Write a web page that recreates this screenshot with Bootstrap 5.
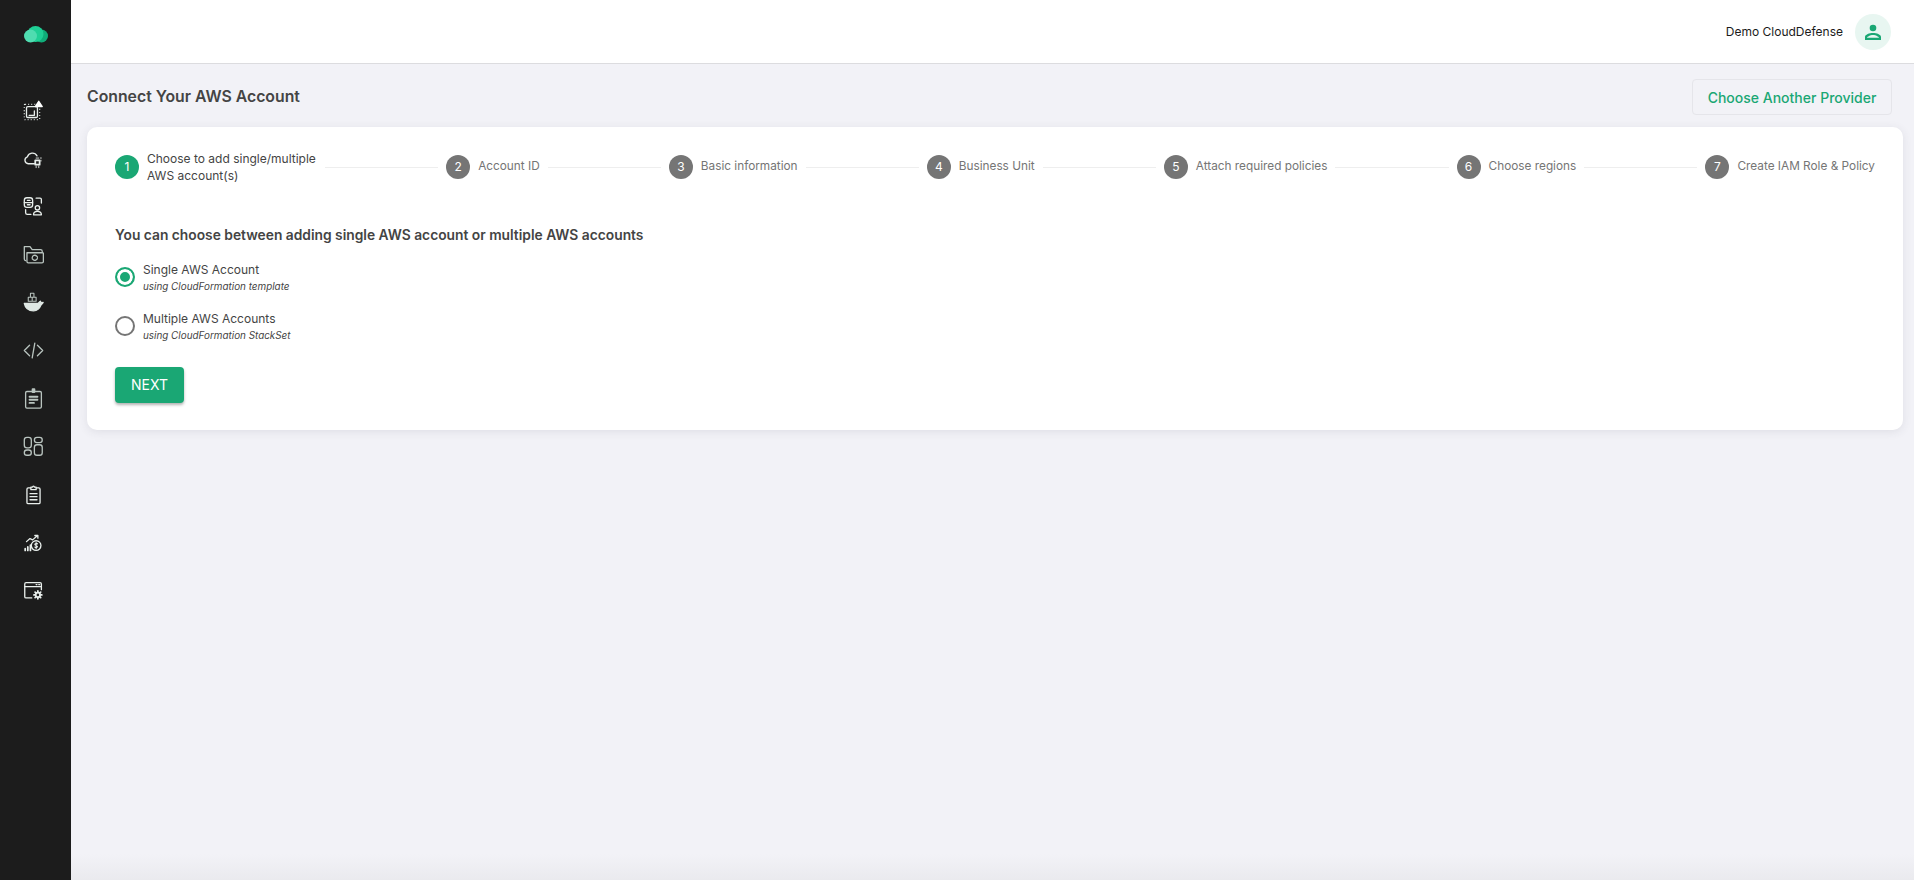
<!DOCTYPE html>
<html lang="en">

<head>
    <meta charset="utf-8">
    <title>Connect Your AWS Account</title>
    <link href="https://cdn.jsdelivr.net/npm/bootstrap@5.3.2/dist/css/bootstrap.min.css" rel="stylesheet">
    <script src="https://cdn.jsdelivr.net/npm/bootstrap@5.3.2/dist/js/bootstrap.bundle.min.js"></script>

    <style>
        html, body {
            height: 100%;
        }

        body {
            font-family: Inter, "Liberation Sans", sans-serif;
            color: #444;
            background: #f2f2f7;
            overflow: hidden;
        }

        .side-rail {
            width: 71px;
            height: 880px;
            background: #1c1c1c;
            padding: 26px 5px 0 0;
        }

        .rail-logo {
            height: 18px;
            margin-right: -5px;
            margin-bottom: 42px;
        }

        .rail-icon {
            height: 48.1px;
        }

        .rail-icon svg {
            width: 21px;
            height: 21px;
            fill: none;
            stroke: #e9efec;
            stroke-width: 1.5;
            stroke-linecap: round;
            stroke-linejoin: round;
        }

        .rail-icon .dim {
            stroke: #b9c4bf;
        }

        .top-strip {
            height: 64px;
            background: #fff;
            border-bottom: 1px solid #dcdcdf;
            padding-right: 23px;
            gap: 12px;
            font-size: 12px;
            color: #1b1b1b;
        }

        .user-dot {
            width: 36px;
            height: 36px;
            background: #e8f6f1;
        }

        .page-body {
            height: 816px;
            padding: 15px 22px 0 16px;
            background: linear-gradient(to bottom, #f2f2f7 0, #f2f2f7 790px, #eaeaee 816px);
        }

        .page-title {
            font-size: 15.8px;
            font-weight: 600;
            color: #444;
        }

        .provider-btn {
            width: 200px;
            height: 36px;
            padding: 0;
            font-size: 14px;
            font-weight: 500;
            color: #1aa774;
            background: transparent;
            border: 1px solid #e5e5ea;
            border-radius: 4px;
        }

        .wizard-card {
            height: 303px;
            margin-right: -11px;
            margin-top: 12px;
            padding: 28px 28px 0;
            background: #fff;
            border-radius: 10px;
            box-shadow: 0 2px 10px rgba(60, 60, 80, .10);
        }

        .step-row {
            height: 24px;
            margin-bottom: 46px;
            font-size: 11.8px;
            color: #757575;
        }

        .step-num {
            width: 24px;
            height: 24px;
            font-size: 12px;
            color: #fff;
            background: #757575;
        }

        .step-on .step-num {
            background: #1aa774;
        }

        .step-on {
            color: #444;
        }

        .step-first {
            width: 170px;
            font-size: 12px;
            line-height: 17px;
        }

        .step-line {
            height: 1px;
            margin: 1px 8px 0;
            background: #eeeeee;
        }

        .wizard-q {
            font-size: 13.8px;
            font-weight: 600;
            color: #444;
            margin-bottom: 7px;
        }

        .pick-row {
            height: 49px;
            gap: 8px;
        }

        .pick-row .form-check-input {
            width: 20px;
            height: 20px;
            margin: 0;
            background-image: none;
            background-color: #fff;
            border: 2px solid #757575;
            box-shadow: none;
        }

        .pick-row .form-check-input:checked {
            background-image: none;
            background-color: #1aa774;
            border-color: #1aa774;
            box-shadow: inset 0 0 0 3px #fff;
        }

        .pick-title {
            font-size: 12px;
            line-height: 17px;
            color: #444;
        }

        .pick-sub {
            font-size: 9.9px;
            line-height: 16px;
            font-style: italic;
            color: #444;
        }

        .next-btn {
            width: 69px;
            height: 36px;
            padding: 0;
            margin-top: 16px;
            font-size: 14px;
            color: #fff;
            background: #1aa774;
            border: 0;
            border-radius: 4px;
            box-shadow: 0 2px 3px rgba(0, 0, 0, .3);
        }
    </style>
</head>

<body>
    <div class="d-flex">

        <div class="side-rail flex-shrink-0">
            <div class="rail-logo d-flex justify-content-center">
                <svg width="24" height="18" viewBox="0 0 24 18">
                    <circle fill="#10ad79" cx="17.500" cy="10" r="6.500" />
                    <circle fill="#1fcf95" cx="11.500" cy="8" r="8" />
                    <circle fill="#4fdcb0" cx="6.500" cy="10" r="6.500" />
                </svg>
            </div>

            <div class="rail-icon d-flex justify-content-center align-items-center">
                <svg viewBox="0 0 24 24">
                    <rect x="1.500" y="5" width="17.500" height="17.500" rx="1" stroke-width="1.500" stroke-dasharray="1 2.500" stroke-linecap="butt" />
                    <rect x="4" y="7.500" width="12.500" height="12.500" rx="1.500" />
                    <path d="M7 17.500h6v-5" />
                    <path fill="#fff" stroke="#fff" d="M18 1.500l4 6h-8z" />
                </svg>
            </div>
            <div class="rail-icon d-flex justify-content-center align-items-center">
                <svg viewBox="0 0 24 24">
                    <path d="M13 18H6a4 4 0 0 1-1-7.800A6 6 0 0 1 16 9" />
                    <rect x="14" y="14" width="5" height="5" stroke-width="2" />
                    <path stroke-width="1" d="M15 20.500v2M18 20.500v2M20.500 11v1M20.500 14v1M15 11.500h3" />
                </svg>
            </div>
            <div class="rail-icon d-flex justify-content-center align-items-center">
                <svg viewBox="0 0 24 24">
                    <rect x="1.500" y="2" width="9.500" height="11" rx="3" />
                    <path d="M1.500 7.500h9.500M5 5h3M5 10h3" />
                    <path d="M15 2.500h4.500A1.500 1.500 0 0 1 21 4v4M3 15.500V19a2 2 0 0 0 2 2h4" />
                    <circle cx="16.500" cy="13.500" r="2.500" />
                    <path d="M12 21.500c0-3 2-4 4.500-4s4.500 1 4.500 4z" />
                </svg>
            </div>
            <div class="rail-icon d-flex justify-content-center align-items-center">
                <svg viewBox="0 0 24 24">
                    <path class="dim" d="M3 19a2 2 0 0 1-1.500-2V3h6.500l2.500 3.500H20a2 2 0 0 1 2 2" />
                    <path class="dim" d="M4.500 10h18a.8.8 0 0 1 .8.8V20a1.500 1.500 0 0 1-1.500 1.500H6a1.500 1.500 0 0 1-1.500-1.500z" />
                    <path class="dim" d="M10.500 15.500a3 3 0 0 1 5-1.800l1 1M16.500 16a3 3 0 0 1-5 1.800l-1-1" />
                </svg>
            </div>
            <div class="rail-icon d-flex justify-content-center align-items-center">
                <svg viewBox="0 0 24 24">
                    <path class="dim" stroke-width="1.200" d="M8.500 1.500h4v4.500h-4zM6 6h4.500v4.500H6zM10.500 6H15v4.500h-4.500z" />
                    <path fill="#dfe8e4" stroke="#dfe8e4" d="M1.500 13h16c.8-1.500 2-2 2.500-2.500l.5 2 2.500-.5-2.500 3c-1.500 4-4.500 6.500-8.500 6.500-5.500 0-9.500-3.500-10.500-8.500z" />
                </svg>
            </div>
            <div class="rail-icon d-flex justify-content-center align-items-center">
                <svg viewBox="0 0 24 24">
                    <path class="dim" d="M7.500 6l-6 6 6 6M16.500 6l6 6-6 6M13.500 3.500l-3 17" />
                </svg>
            </div>
            <div class="rail-icon d-flex justify-content-center align-items-center">
                <svg viewBox="0 0 24 24">
                    <rect class="dim" x="3" y="4" width="18" height="19" rx="1.500" />
                    <path class="dim" stroke-width="2.200" d="M11 1.500h2v3h-2zM7.500 10h9M7.500 13.500h9M7.500 17h5" />
                </svg>
            </div>
            <div class="rail-icon d-flex justify-content-center align-items-center">
                <svg viewBox="0 0 24 24">
                    <rect class="dim" x="1.500" y="1.500" width="8" height="12" rx="3" />
                    <rect class="dim" x="1.500" y="16" width="8" height="6" rx="3" />
                    <rect class="dim" x="13" y="1.500" width="9" height="6" rx="3" />
                    <rect class="dim" x="13" y="10" width="9" height="12" rx="3" />
                </svg>
            </div>
            <div class="rail-icon d-flex justify-content-center align-items-center">
                <svg viewBox="0 0 24 24">
                    <path d="M8.500 4.500H6a1.500 1.500 0 0 0-1.500 1.500v15A1.500 1.500 0 0 0 6 22.500h12a1.500 1.500 0 0 0 1.500-1.500V6A1.500 1.500 0 0 0 18 4.500h-2.500" />
                    <path d="M9 6.500V3.500h2a1 1 0 0 1 2 0h2v3zM8 11h8M8 14.500h8M8 18h8" />
                </svg>
            </div>
            <div class="rail-icon d-flex justify-content-center align-items-center">
                <svg viewBox="0 0 24 24">
                    <circle cx="15" cy="15.500" r="5.500" />
                    <path stroke-width="1.300" d="M16.500 13.500c-1-.8-3-.5-3 .8s3 .9 3 2.300-2 1.500-3 .7M15 12v7" />
                    <path stroke-width="2" d="M2.500 21v-2M5.500 21v-4M8.500 21v-6" />
                    <path stroke-width="1.500" d="M4 11l4-3.500 3 1.500 5-4.500M13.500 4h3.500v3" />
                </svg>
            </div>
            <div class="rail-icon d-flex justify-content-center align-items-center">
                <svg viewBox="0 0 24 24">
                    <path d="M10 20.500H3.500A1.500 1.500 0 0 1 2 19V4.500A1.500 1.500 0 0 1 3.500 3h16A1.500 1.500 0 0 1 21 4.500V11" />
                    <path d="M2 7.500h19M15 5.200h1M18 5.200h1" />
                    <circle cx="17" cy="17" r="2.500" stroke-width="2" />
                    <path stroke-width="2" d="M17 12.500v1.500M17 20v1.500M12.500 17H14M20 17h1.500M13.800 13.800l1 1M19.200 19.200l1 1M13.800 20.200l1-1M19.200 14.800l1-1" />
                </svg>
            </div>
        </div>

        <div class="flex-grow-1">
            <div class="top-strip d-flex justify-content-end align-items-center">
                <span>Demo CloudDefense</span>
                <span class="user-dot rounded-circle d-flex justify-content-center align-items-center">
                    <svg width="18" height="18" viewBox="0 0 18 18" fill="#1aa774">
                        <circle cx="9" cy="5" r="3.300" />
                        <path fill-rule="evenodd" d="M1 14c0-2.500 4.500-4 8-4s8 1.500 8 4v3H1zm2 .8h12c-.3-1.200-3.200-2.800-6-2.800s-5.700 1.600-6 2.800z" />
                    </svg>
                </span>
            </div>

            <div class="page-body">
                <div class="d-flex justify-content-between align-items-center">
                    <div class="page-title">Connect Your AWS Account</div>
                    <button type="button" class="btn provider-btn">Choose Another Provider</button>
                </div>

                <div class="wizard-card">
                    <div class="step-row d-flex align-items-center">
                        <div class="step-on d-flex align-items-center gap-2 flex-shrink-0">
                            <span class="step-num rounded-circle d-flex justify-content-center align-items-center flex-shrink-0">1</span>
                            <span class="step-first">Choose to add single/multiple AWS account(s)</span>
                        </div>
                        <div class="step-line flex-grow-1"></div>
                        <div class="d-flex align-items-center gap-2 flex-shrink-0">
                            <span class="step-num rounded-circle d-flex justify-content-center align-items-center">2</span>
                            <span>Account ID</span>
                        </div>
                        <div class="step-line flex-grow-1"></div>
                        <div class="d-flex align-items-center gap-2 flex-shrink-0">
                            <span class="step-num rounded-circle d-flex justify-content-center align-items-center">3</span>
                            <span>Basic information</span>
                        </div>
                        <div class="step-line flex-grow-1"></div>
                        <div class="d-flex align-items-center gap-2 flex-shrink-0">
                            <span class="step-num rounded-circle d-flex justify-content-center align-items-center">4</span>
                            <span>Business Unit</span>
                        </div>
                        <div class="step-line flex-grow-1"></div>
                        <div class="d-flex align-items-center gap-2 flex-shrink-0">
                            <span class="step-num rounded-circle d-flex justify-content-center align-items-center">5</span>
                            <span>Attach required policies</span>
                        </div>
                        <div class="step-line flex-grow-1"></div>
                        <div class="d-flex align-items-center gap-2 flex-shrink-0">
                            <span class="step-num rounded-circle d-flex justify-content-center align-items-center">6</span>
                            <span>Choose regions</span>
                        </div>
                        <div class="step-line flex-grow-1"></div>
                        <div class="d-flex align-items-center gap-2 flex-shrink-0">
                            <span class="step-num rounded-circle d-flex justify-content-center align-items-center">7</span>
                            <span>Create IAM Role &amp; Policy</span>
                        </div>
                    </div>

                    <div class="wizard-q">You can choose between adding single AWS account or multiple AWS accounts</div>

                    <label class="pick-row d-flex align-items-center">
                        <input class="form-check-input" type="radio" name="accountType" checked>
                        <span>
                            <span class="pick-title d-block">Single AWS Account</span>
                            <span class="pick-sub d-block">using CloudFormation template</span>
                        </span>
                    </label>
                    <label class="pick-row d-flex align-items-center">
                        <input class="form-check-input" type="radio" name="accountType">
                        <span>
                            <span class="pick-title d-block">Multiple AWS Accounts</span>
                            <span class="pick-sub d-block">using CloudFormation StackSet</span>
                        </span>
                    </label>

                    <button type="button" class="btn next-btn">NEXT</button>
                </div>
            </div>
        </div>

    </div>
</body>

</html>
